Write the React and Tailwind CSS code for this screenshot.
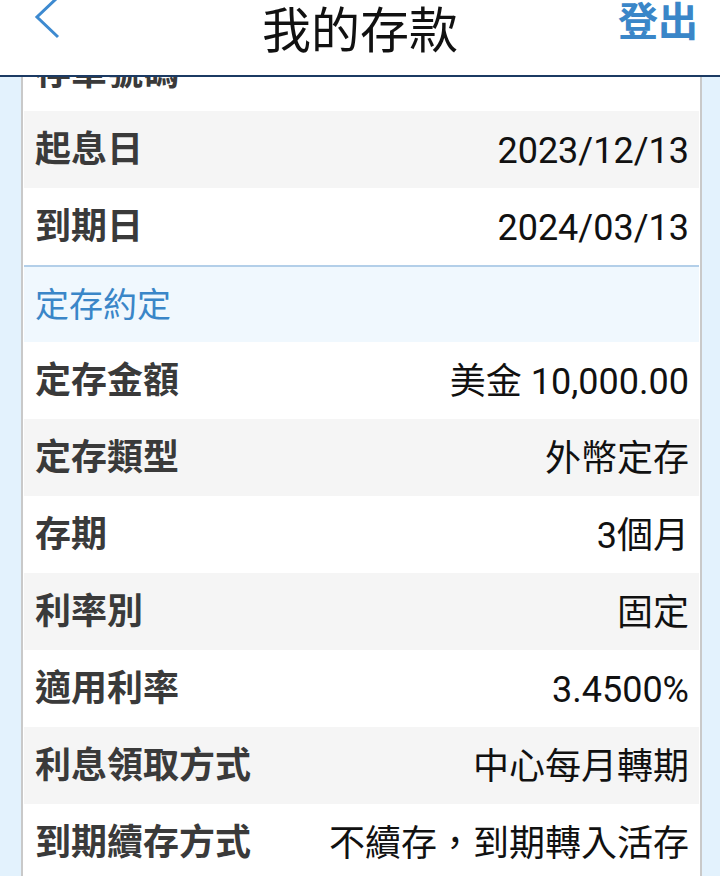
const font = "font-['Roboto','Noto_Sans_CJK_TC','Noto_Sans_CJK_SC',sans-serif]"

const topRows = [
  { label: '存單號碼', value: '', gray: false },
  { label: '起息日', value: '2023/12/13', gray: true },
  { label: '到期日', value: '2024/03/13', gray: false },
]

const termRows = [
  { label: '定存金額', value: '美金 10,000.00', gray: false },
  { label: '定存類型', value: '外幣定存', gray: true },
  { label: '存期', value: '3個月', gray: false },
  { label: '利率別', value: '固定', gray: true },
  { label: '適用利率', value: '3.4500%', gray: false },
  { label: '利息領取方式', value: '中心每月轉期', gray: true },
  { label: '到期續存方式', value: '不續存，到期轉入活存', gray: false },
]

function Row({ label, value, gray }) {
  return (
    <div
      className={`flex h-[77px] items-center justify-between pl-[11px] pr-[10px] ${gray ? 'bg-[#f5f5f5]' : 'bg-white'}`}
    >
      <span className="text-[36px] font-bold leading-none text-[#3a3a3a]">{label}</span>
      <span className="pt-[2px] text-[36px] leading-none text-[#111111]">{value}</span>
    </div>
  )
}

export default function App() {
  return (
    <div className={`flex h-[876px] flex-col overflow-hidden bg-[#e3f2fd] ${font}`}>
      <header className="grid h-[77px] shrink-0 grid-cols-[1fr_auto_1fr] border-b-2 border-[#1b3a63] bg-white">
        <div className="flex items-start pl-[34px]">
          <svg width="26" height="44" viewBox="0 0 26 44" className="-mt-[4px]" fill="none">
            <path d="M23 2 L3 21 L24 41" stroke="#3d8ad0" strokeWidth="3" strokeLinecap="butt" strokeLinejoin="miter" />
          </svg>
        </div>
        <h1 className="pt-[7px] text-[49px] font-normal leading-none text-[#111111]">我的存款</h1>
        <div className="flex items-start justify-end pr-[22px]">
          <button className="pt-[3px] text-[40px] font-bold leading-none text-[#3a86c8]">登出</button>
        </div>
      </header>

      <main className="flex-1 overflow-hidden">
        <div className="-mt-[43px] ml-[21px] mr-[18px] border-x-2 border-[#c9c9c9] bg-white px-px">
          {topRows.map((row) => (
            <Row key={row.label} {...row} />
          ))}
          <div className="flex h-[77px] items-center border-t-2 border-[#b3cfe9] bg-[#f0f8fe] px-[11px]">
            <span className="text-[34px] leading-none text-[#3a86c8]">定存約定</span>
          </div>
          {termRows.map((row) => (
            <Row key={row.label} {...row} />
          ))}
        </div>
      </main>
    </div>
  )
}
